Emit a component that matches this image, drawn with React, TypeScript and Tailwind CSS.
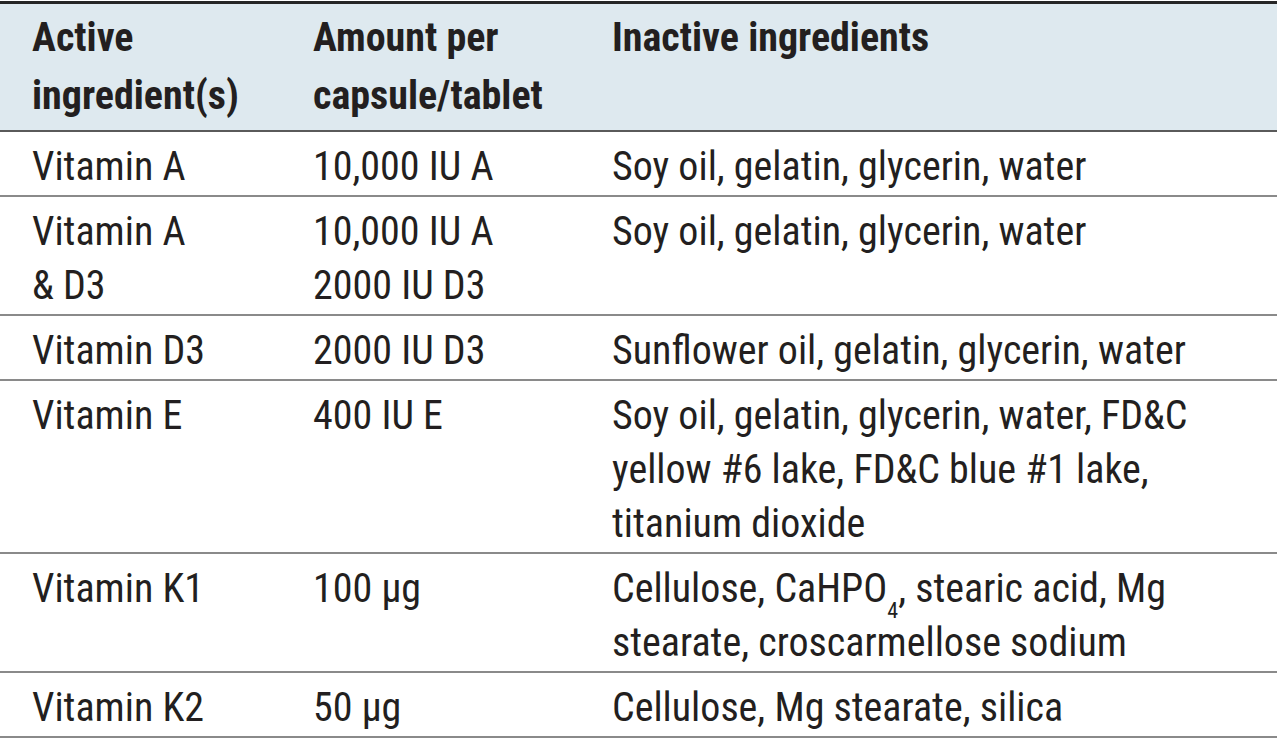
import React from 'react';

type Row = {
  active: React.ReactNode;
  amount: React.ReactNode;
  inactive: React.ReactNode;
};

const rows: Row[] = [
  {
    active: 'Vitamin A',
    amount: '10,000 IU A',
    inactive: 'Soy oil, gelatin, glycerin, water',
  },
  {
    active: (
      <>
        Vitamin A<br />&amp; D3
      </>
    ),
    amount: (
      <>
        10,000 IU A<br />2000 IU D3
      </>
    ),
    inactive: 'Soy oil, gelatin, glycerin, water',
  },
  {
    active: 'Vitamin D3',
    amount: '2000 IU D3',
    inactive: 'Sunflower oil, gelatin, glycerin, water',
  },
  {
    active: 'Vitamin E',
    amount: '400 IU E',
    inactive: (
      <>
        Soy oil, gelatin, glycerin, water, FD&amp;C
        <br />
        yellow #6 lake, FD&amp;C blue #1 lake,
        <br />
        titanium dioxide
      </>
    ),
  },
  {
    active: 'Vitamin K1',
    amount: '100 μg',
    inactive: (
      <>
        Cellulose, CaHPO<sub className="text-[22px] leading-[0] align-[-10px]">4</sub>, stearic acid, Mg
        <br />
        stearate, croscarmellose sodium
      </>
    ),
  },
  {
    active: 'Vitamin K2',
    amount: '50 μg',
    inactive: 'Cellulose, Mg stearate, silica',
  },
];

export default function App() {
  return (
    <div
      className="w-[1277px] min-h-[742px] bg-white text-[#231f20] text-[40px]"
      style={{ fontFamily: "'Roboto Condensed', 'Liberation Sans', sans-serif" }}>
      <div className="mt-px border-t-[3px] border-[#262626]">
        <div className="grid grid-cols-[313px_299px_1fr] bg-[#dee9ef] border-b-2 border-[#5a5a5a] font-bold leading-[58px] pt-[5px] pb-[5px]">
          <div className="pl-8">
            Active
            <br />
            ingredient(s)
          </div>
          <div>
            Amount per
            <br />
            capsule/tablet
          </div>
          <div>Inactive ingredients</div>
        </div>
        {rows.map((r, i) => (
          <div
            key={i}
            className="grid grid-cols-[313px_299px_1fr] border-b-2 border-[#8a8a8a] leading-[54px] pt-[8px] pb-px">
            <div className="pl-8">{r.active}</div>
            <div>{r.amount}</div>
            <div>{r.inactive}</div>
          </div>
        ))}
      </div>
    </div>
  );
}
